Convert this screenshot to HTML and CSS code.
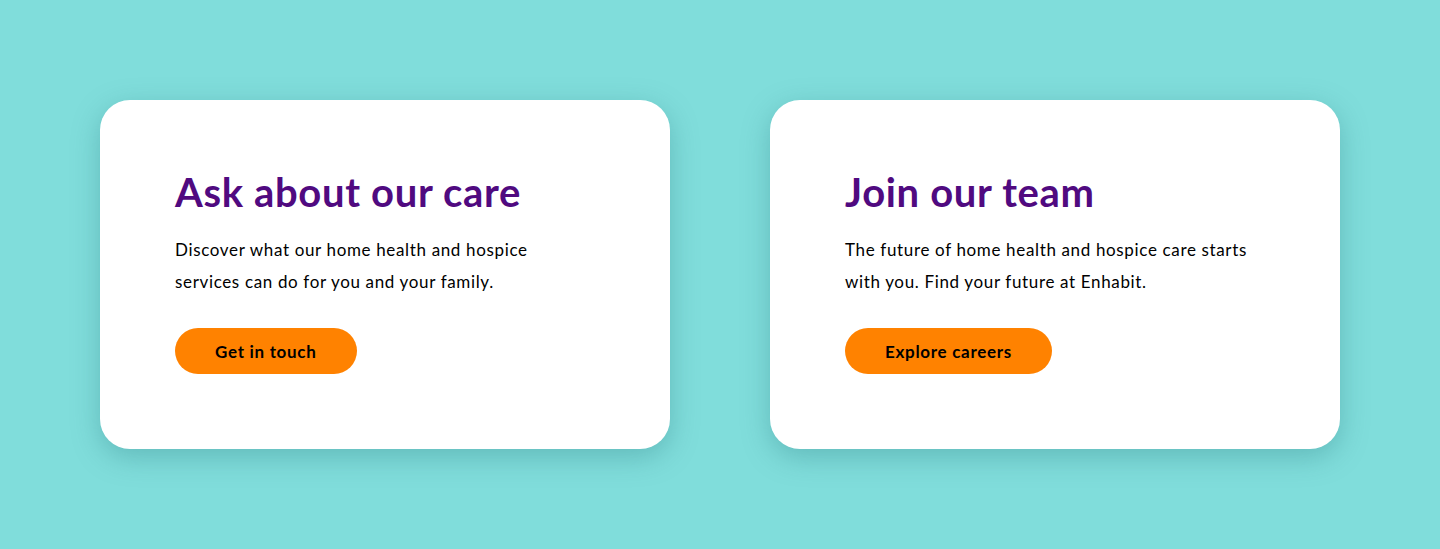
FILE: index.html
```html
<!DOCTYPE html>
<html lang="en">
<head>
<meta charset="utf-8">
<title>Enhabit</title>
<link rel="stylesheet" href="styles.css">
</head>
<body>
<main class="section">
  <div class="card">
    <h2 class="card-title">Ask about our care</h2>
    <p class="card-text">Discover what our home health and hospice<br>services can do for you and your family.</p>
    <a class="btn" href="#">Get in touch</a>
  </div>
  <div class="card">
    <h2 class="card-title">Join our team</h2>
    <p class="card-text">The future of home health and hospice care starts<br>with you. Find your future at Enhabit.</p>
    <a class="btn" href="#">Explore careers</a>
  </div>
</main>
</body>
</html>
```
FILE: styles.css
```css
html, body {
  margin: 0;
  padding: 0;
}
body {
  background: #80dddb;
  font-family: Lato, "Open Sans", sans-serif;
  height: 549px;
  overflow: hidden;
}
.section {
  display: flex;
  gap: 100px;
  padding: 100px;
}
.card {
  flex: 1;
  background: #ffffff;
  border-radius: 30px;
  box-shadow: 0 8px 28px rgba(40, 120, 125, 0.35);
  padding: 72px 75px 75px;
  height: 349px;
  box-sizing: border-box;
  display: flex;
  flex-direction: column;
  align-items: flex-start;
}
.card-title {
  margin: 0;
  font-size: 40px;
  line-height: 40px;
  font-weight: 700;
  color: #500a80;
  letter-spacing: 0.65px;
}
.card-text {
  margin: 22px 0 0;
  font-size: 17px;
  line-height: 32px;
  color: #000000;
  letter-spacing: 0.65px;
  white-space: nowrap;
}
.btn {
  margin-top: 30px;
  display: inline-flex;
  align-items: center;
  justify-content: center;
  height: 46px;
  padding: 0 40px;
  border-radius: 23px;
  background: #ff8200;
  color: #000000;
  font-weight: 700;
  font-size: 17px;
  letter-spacing: 0.7px;
  text-decoration: none;
}
```
